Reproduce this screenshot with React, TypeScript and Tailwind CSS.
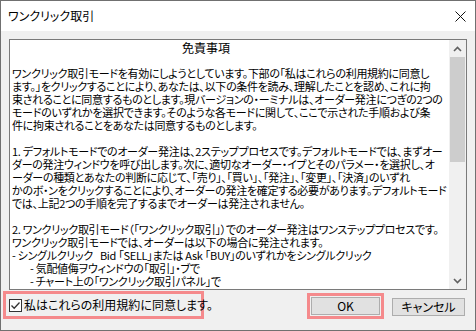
import React from "react";

const JP = "font-['Noto_Sans_CJK_JP','Noto_Sans',sans-serif] [font-feature-settings:'palt']";

function Line({ children, indent = false }: { children?: React.ReactNode; indent?: boolean }) {
  return (
    <div className={`h-[13px] leading-[13px] whitespace-nowrap ${indent ? "pl-[18px]" : ""}`}>
      {children}
    </div>
  );
}

function Chevron({ up }: { up: boolean }) {
  return (
    <svg width="9" height="6" viewBox="0 0 9 6" className="block">
      <path
        d={up ? "M1 5 L4.5 1.5 L8 5" : "M1 1 L4.5 4.5 L8 1"}
        fill="none"
        stroke="#606060"
        strokeWidth="1.6"
      />
    </svg>
  );
}

export default function App() {
  return (
    <div className={`w-[476px] h-[331px] border border-[#707070] bg-[#f0f0f0] flex flex-col overflow-hidden text-black ${JP}`}>
      {/* Title bar */}
      <div className="h-[30px] bg-white flex items-center justify-between pl-[7px] pr-[9px] shrink-0">
        <span className="text-[12px] leading-[12px]">ワンクリック取引</span>
        <svg width="11" height="11" viewBox="0 0 11 11" className="block">
          <path d="M0.5 0.5 L10.5 10.5 M10.5 0.5 L0.5 10.5" stroke="#111" strokeWidth="1" />
        </svg>
      </div>

      {/* Body */}
      <div className="pt-[8px] px-[8px] shrink-0">
        <div className="h-[251px] border border-[#7a7a7a] bg-white flex">
          <div className="flex-1 overflow-hidden pl-[2px] pt-[1px] text-[11px] tracking-[-0.3px]">
            <Line>
              <span className="pl-[170px] text-[12px] tracking-normal">免責事項</span>
            </Line>
            <Line />
            <Line>ワンクリック取引モードを有効にしようとしています。下部の「私はこれらの利用規約に同意し</Line>
            <Line>ます。」をクリックすることにより、あなたは、以下の条件を読み、理解したことを認め、これに拘</Line>
            <Line>束されることに同意するものとします。現バージョンの・ーミナルは、オーダー発注につぎの2つの</Line>
            <Line>モードのいずれかを選択できます。そのような各モードに関して、ここで示された手順および条</Line>
            <Line>件に拘束されることをあなたは同意するものとします。</Line>
            <Line />
            <Line>1. デフォルトモードでのオーダー発注は、2ステッププロセスです。デフォルトモードでは、まずオー</Line>
            <Line>ダーの発注ウィンドウを呼び出します。次に、適切なオーダー・イプとそのパラメー・を選択し、オ</Line>
            <Line>ーダーの種類とあなたの判断に応じて、「売り」、「買い」、「発注」、「変更」、「決済」のいずれ</Line>
            <Line>かのボ・ンをクリックすることにより、オーダーの発注を確定する必要があります。デフォルトモード</Line>
            <Line>では、上記2つの手順を完了するまでオーダーは発注されません。</Line>
            <Line />
            <Line>2. ワンクリック取引モード（「ワンクリック取引」）でのオーダー発注はワンステッププロセスです。</Line>
            <Line>ワンクリック取引モードでは、オーダーは以下の場合に発注されます。</Line>
            <Line>
              - シングルクリック<span className="pl-[7px]">Bid 「SELL」または Ask 「BUY」のいずれかをシングルクリック</span>
            </Line>
            <Line indent>- 気配値侮ヲウィンドウの「取引」・ブで</Line>
            <Line indent>- チャート上の「ワンクリック取引パネル」で</Line>
          </div>
          {/* Scrollbar */}
          <div className="w-[17px] bg-[#f0f0f0] flex flex-col shrink-0">
            <div className="h-[17px] flex items-center justify-center">
              <Chevron up />
            </div>
            <div className="h-[105px] mx-[1px] bg-[#cdcdcd]" />
            <div className="flex-1" />
            <div className="h-[17px] flex items-center justify-center">
              <Chevron up={false} />
            </div>
          </div>
        </div>
      </div>

      {/* Bottom row */}
      <div className="flex items-start text-[12px]">
        <div className="ml-[2px] mt-[1px] w-[201px] h-[28px] border-[3px] border-[#f58a8c] flex items-center pl-[3px]">
          <div className="w-[13px] h-[13px] border border-[#333] bg-white flex items-center justify-center">
            <svg width="11" height="11" viewBox="0 0 11 11" className="block">
              <path d="M1.5 5.5 L4.2 8.3 L9.5 2.5" fill="none" stroke="#333" strokeWidth="1.3" />
            </svg>
          </div>
          <span className="ml-[2px] leading-[14px] whitespace-nowrap">私はこれらの利用規約に同意します。</span>
        </div>
        <div className="flex-1" />
        <div className="mt-[3px] w-[77px] h-[26px] border-[3px] border-[#f58a8c] p-[1px]">
          <div className="w-full h-full bg-[#e1e1e1] border border-[#adadad] flex items-center justify-center leading-[12px]">
            OK
          </div>
        </div>
        <div className="mt-[8px] ml-[8px] mr-[10px] w-[73px] h-[18px] bg-[#e1e1e1] border border-[#adadad] flex items-center justify-center leading-[12px]">
          キャンセル
        </div>
      </div>
    </div>
  );
}
